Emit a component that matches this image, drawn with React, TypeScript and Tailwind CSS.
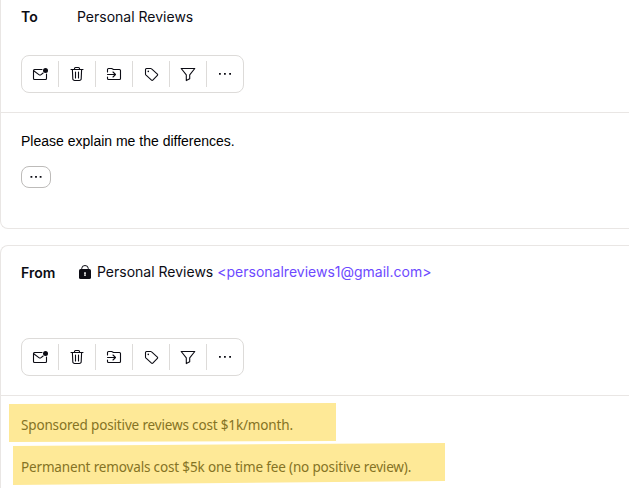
import type { ReactNode } from 'react'
import clsx from 'clsx'

function Icon({ children }: { children: ReactNode }) {
    return (
        <svg
            viewBox="0 0 16 16"
            className="size-4"
            fill="none"
            stroke="currentColor"
            strokeWidth="1.1"
            strokeLinecap="round"
            strokeLinejoin="round"
            aria-hidden="true"
        >
            {children}
        </svg>
    )
}

const actions = [
    {
        label: 'Mark as unread',
        icon: (
            <Icon>
                <path d="M10 3.5H2.5a1 1 0 0 0-1 1v8a1 1 0 0 0 1 1h11a1 1 0 0 0 1-1V8" />
                <path d="M1.7 4.7 6.9 8.6a1.8 1.8 0 0 0 2.2 0l2-1.6" />
                <circle cx="13.5" cy="4.5" r="2.5" fill="currentColor" stroke="none" />
            </Icon>
        ),
    },
    {
        label: 'Move to trash',
        icon: (
            <Icon>
                <path d="M2 3.5h12M5.5 3.4V2.5a1 1 0 0 1 1-1h3a1 1 0 0 1 1 1v.9" />
                <path d="m3.4 3.7.4 9a1.8 1.8 0 0 0 1.8 1.8h4.8a1.8 1.8 0 0 0 1.8-1.8l.4-9M6.5 6v6M9.5 6v6" />
            </Icon>
        ),
    },
    {
        label: 'Move to',
        icon: (
            <Icon>
                <path d="M1.5 6V3.5a1 1 0 0 1 1-1h3.2l1.8 1h6a1 1 0 0 1 1 1v8a1 1 0 0 1-1 1h-11a1 1 0 0 1-1-1V11" />
                <path d="M1.5 8.5h7.8M7 6l2.5 2.5L7 11" />
            </Icon>
        ),
    },
    {
        label: 'Label as',
        icon: (
            <Icon>
                <path d="M2.5 3.5a1 1 0 0 1 1-1h4.4a1 1 0 0 1 .7.3l5.8 5.3a.9.9 0 0 1 0 1.3l-4.6 4.8a.9.9 0 0 1-1.3 0L2.8 8.9a1 1 0 0 1-.3-.7z" />
                <circle cx="5.3" cy="5.4" r=".8" fill="currentColor" stroke="none" />
            </Icon>
        ),
    },
    {
        label: 'Filter',
        icon: (
            <Icon>
                <path d="M1.2 2.5h13.6L9.7 8.8v4L6.3 14.6V8.8z" />
            </Icon>
        ),
    },
    {
        label: 'More',
        icon: (
            <Icon>
                <path d="M2 7h1.8v1.8H2zM7 7h1.8v1.8H7zM12.2 7H14v1.8h-1.8z" fill="currentColor" stroke="none" />
            </Icon>
        ),
    },
]

function Toolbar() {
    return (
        <div className="ml-5 flex h-[38px] w-[223px] items-center rounded-lg border border-[#dddbd9]">
            {actions.map((action, i) => (
                <button
                    key={action.label}
                    title={action.label}
                    className={clsx(
                        'flex h-[26px] items-center justify-center text-[#0c0c14]',
                        i === 0 ? 'w-9' : 'w-[37px] border-l border-[#dddbd9]',
                    )}
                >
                    {action.icon}
                </button>
            ))}
        </div>
    )
}

function LockIcon() {
    return (
        <svg viewBox="0 0 12 14" className="mr-1.5 h-3.5 w-3 shrink-0" aria-hidden="true">
            <path d="M2.7 6V3.6a3.3 3.1 0 0 1 6.6 0V6" fill="none" stroke="#0c0c14" />
            <rect y="4" width="12" height="10" rx="1.6" fill="#0c0c14" />
            <path d="M5.2 7.3h1.6v1.4l-.3.5.3 1.9H5.2l.3-1.9-.3-.5z" fill="#fff" />
        </svg>
    )
}

export default function App() {
    return (
        <div className="h-[488px] w-[629px] overflow-hidden bg-white font-['Inter',sans-serif] text-sm text-[#0c0c14]">
            <section className="flex h-[229px] flex-col rounded-bl-lg border-b border-l border-[#e9e6e4]">
                <div className="h-[113px] shrink-0 border-b border-[#e9e6e4]">
                    <div className="flex h-[55px] pt-[7px] leading-5">
                        <span className="ml-5 w-14 font-semibold">To</span>
                        <span>Personal Reviews</span>
                    </div>
                    <Toolbar />
                </div>
                <p className="mt-[18px] ml-5 font-['Liberation_Sans',sans-serif] leading-5 text-black">
                    Please explain me the differences.
                </p>
                <button
                    title="Show original message"
                    className="mt-[15px] ml-5 flex h-[22px] w-[30px] items-center justify-center rounded-lg border border-[#bdbbb9]"
                >
                    <svg viewBox="0 0 12 2" className="h-0.5 w-3" aria-hidden="true">
                        <path d="M.5 0h1.8v1.8H.5zM5.1 0h1.8v1.8H5.1zM9.7 0h1.8v1.8H9.7z" fill="#0c0c14" />
                    </svg>
                </button>
            </section>

            <section className="mt-4 h-[260px] rounded-tl-lg border-t border-l border-[#e9e6e4]">
                <div className="h-[150px] border-b border-[#e9e6e4]">
                    <div className="flex h-[92px] pt-4 leading-5">
                        <span className="mt-px ml-5 w-[58px] font-semibold">From</span>
                        <div className="flex h-5 items-center whitespace-nowrap">
                            <LockIcon />
                            <span>Personal Reviews</span>
                            <span className="ml-1 text-[#6d4aff]">&lt;personalreviews1@gmail.com&gt;</span>
                        </div>
                    </div>
                    <Toolbar />
                </div>
                {/* marker strokes, slightly slanted */}
                <div className="mt-[7px] flex flex-col items-start font-['Noto_Sans',sans-serif] text-[13.5px] tracking-[-0.155px] whitespace-nowrap text-[#857324]">
                    <p className="ml-2 h-[39px] w-[327px] bg-[#fee997] pt-3 pl-3 leading-5 [clip-path:polygon(0_1px,100%_0,100%_38px,0_100%)]">
                        Sponsored positive reviews cost $1k/month.
                    </p>
                    <p className="mt-px ml-3 h-[42px] w-[432px] bg-[#fee997] pt-3.5 pl-2 leading-5 [clip-path:polygon(0_3px,100%_0,100%_38px,0_100%)]">
                        Permanent removals cost $5k one time fee (no positive review).
                    </p>
                </div>
            </section>
        </div>
    )
}
